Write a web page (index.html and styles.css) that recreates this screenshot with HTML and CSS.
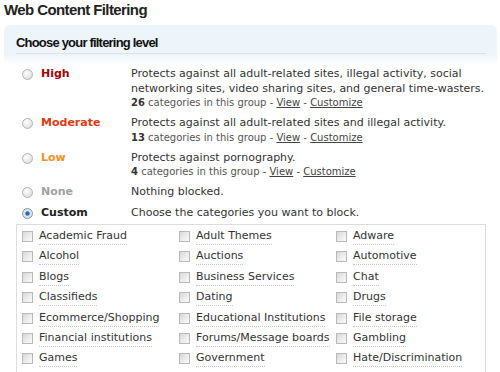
FILE: index.html
```html
<!DOCTYPE html>
<html lang="en">
	<head>
		<meta charset="utf-8" />
		<title>Web Content Filtering</title>
		<link rel="stylesheet" href="styles.css">
	</head>
	<body>
		<h1 class="pageTitle">Web Content Filtering</h1>

		<div class="panel">
			<h2 class="panelTitle">Choose your filtering level</h2>

			<div class="levels">
				<div class="level">
					<span class="radio"></span>
					<span class="levelName high">High</span>
					<div class="levelDesc">
						<p>Protects against all adult-related sites, illegal activity, social networking sites, video sharing sites, and general time-wasters.</p>
						<p class="meta"><b>26</b> categories in this group - <a href="#">View</a> - <a href="#">Customize</a></p>
					</div>
				</div>
				<div class="level">
					<span class="radio"></span>
					<span class="levelName moderate">Moderate</span>
					<div class="levelDesc">
						<p>Protects against all adult-related sites and illegal activity.</p>
						<p class="meta"><b>13</b> categories in this group - <a href="#">View</a> - <a href="#">Customize</a></p>
					</div>
				</div>
				<div class="level">
					<span class="radio"></span>
					<span class="levelName low">Low</span>
					<div class="levelDesc">
						<p>Protects against pornography.</p>
						<p class="meta"><b>4</b> categories in this group - <a href="#">View</a> - <a href="#">Customize</a></p>
					</div>
				</div>
				<div class="level">
					<span class="radio"></span>
					<span class="levelName none">None</span>
					<div class="levelDesc">
						<p>Nothing blocked.</p>
					</div>
				</div>
				<div class="level">
					<span class="radio checked"></span>
					<span class="levelName custom">Custom</span>
					<div class="levelDesc">
						<p>Choose the categories you want to block.</p>
					</div>
				</div>
			</div>

			<div class="categories">
				<label class="cat"><span class="check"></span><span>Academic Fraud</span></label>
				<label class="cat"><span class="check"></span><span>Adult Themes</span></label>
				<label class="cat"><span class="check"></span><span>Adware</span></label>
				<label class="cat"><span class="check"></span><span>Alcohol</span></label>
				<label class="cat"><span class="check"></span><span>Auctions</span></label>
				<label class="cat"><span class="check"></span><span>Automotive</span></label>
				<label class="cat"><span class="check"></span><span>Blogs</span></label>
				<label class="cat"><span class="check"></span><span>Business Services</span></label>
				<label class="cat"><span class="check"></span><span>Chat</span></label>
				<label class="cat"><span class="check"></span><span>Classifieds</span></label>
				<label class="cat"><span class="check"></span><span>Dating</span></label>
				<label class="cat"><span class="check"></span><span>Drugs</span></label>
				<label class="cat"><span class="check"></span><span>Ecommerce/Shopping</span></label>
				<label class="cat"><span class="check"></span><span>Educational Institutions</span></label>
				<label class="cat"><span class="check"></span><span>File storage</span></label>
				<label class="cat"><span class="check"></span><span>Financial institutions</span></label>
				<label class="cat"><span class="check"></span><span>Forums/Message boards</span></label>
				<label class="cat"><span class="check"></span><span>Gambling</span></label>
				<label class="cat"><span class="check"></span><span>Games</span></label>
				<label class="cat"><span class="check"></span><span>Government</span></label>
				<label class="cat"><span class="check"></span><span>Hate/Discrimination</span></label>
				<span class="cat"><span class="check"></span></span>
				<span class="cat"><span class="check"></span></span>
				<span class="cat"><span class="check"></span></span>
			</div>
		</div>
	</body>
</html>
```

FILE: styles.css
```css
*{
	padding:0;
	margin:0;
	box-sizing: border-box;
}
html, body {
	height: 372px;
	overflow: hidden;
}
body {
	background: #fff;
	font-family: "DejaVu Sans", Verdana, sans-serif;
	font-size: 11px;
	color: #333;
}
.pageTitle {
	font-family: "Liberation Sans", Arial, sans-serif;
	font-size: 15px;
	font-weight: bold;
	color: #222;
	line-height: 18px;
	padding: 1px 0 0 4px;
	letter-spacing: -0.6px;
}
.panel {
	margin: 6px 3px 0 4px;
	padding: 9px 11px 0 12px;
	border-radius: 6px 6px 0 0;
	background: linear-gradient(#eef5fa 0, #eef5fa 30px, #fff 40px);
}
.panelTitle {
	font-family: "Liberation Sans", Arial, sans-serif;
	font-size: 13px;
	font-weight: bold;
	color: #111;
	letter-spacing: -0.8px;
	line-height: 18px;
	padding-bottom: 1px;
	border-bottom: 1px solid #dde3e8;
}
.levels {
	padding: 13px 0 0 6px;
}
.level {
	display: flex;
	margin-bottom: 6px;
}
.level:last-child {
	margin-bottom: 4px;
}
.radio {
	flex: none;
	width: 11px;
	height: 11px;
	margin: 2px 8px 0 0;
	border-radius: 50%;
	border: 1px solid #b5b5b5;
	background: radial-gradient(circle at 40% 35%, #fff 0, #e6e6e6 60%, #cfcfcf 100%);
}
.radio.checked {
	border-color: #8a98a8;
	background: radial-gradient(circle, #1d5e9c 0, #2a73b8 1.8px, #e4e8ec 2.6px, #cfd3d8 100%);
}
.levelName {
	flex: none;
	width: 90px;
	font-weight: bold;
	line-height: 14px;
}
.high { color: #a00000; }
.moderate { color: #dd3a10; }
.low { color: #f7901e; }
.none { color: #a0a0a0; }
.custom { color: #222; }
.levelDesc p {
	line-height: 14.5px;
}
.levelDesc .meta {
	font-size: 10px;
	line-height: 14px;
	color: #555;
}
.meta b {
	color: #333;
}
.meta a {
	color: #444;
}
.categories {
	border: 1px solid #ddd;
	border-bottom: none;
	padding: 4px 0 0 5px;
	display: grid;
	grid-template-columns: 157px 157px 1fr;
	grid-auto-rows: 20.4px;
}
.cat {
	display: flex;
	align-items: flex-start;
	line-height: 14px;
	color: #333;
	white-space: nowrap;
}
.check {
	flex: none;
	width: 11px;
	height: 11px;
	margin: 2px 6px 0 0;
	border: 1px solid #b9b9b9;
	background: linear-gradient(135deg, #d8d8d8 0, #eee 60%, #fafafa 100%);
}
.cat span + span {
	border-bottom: 1px dotted #c8c8c8;
	padding-bottom: 1px;
}
```
